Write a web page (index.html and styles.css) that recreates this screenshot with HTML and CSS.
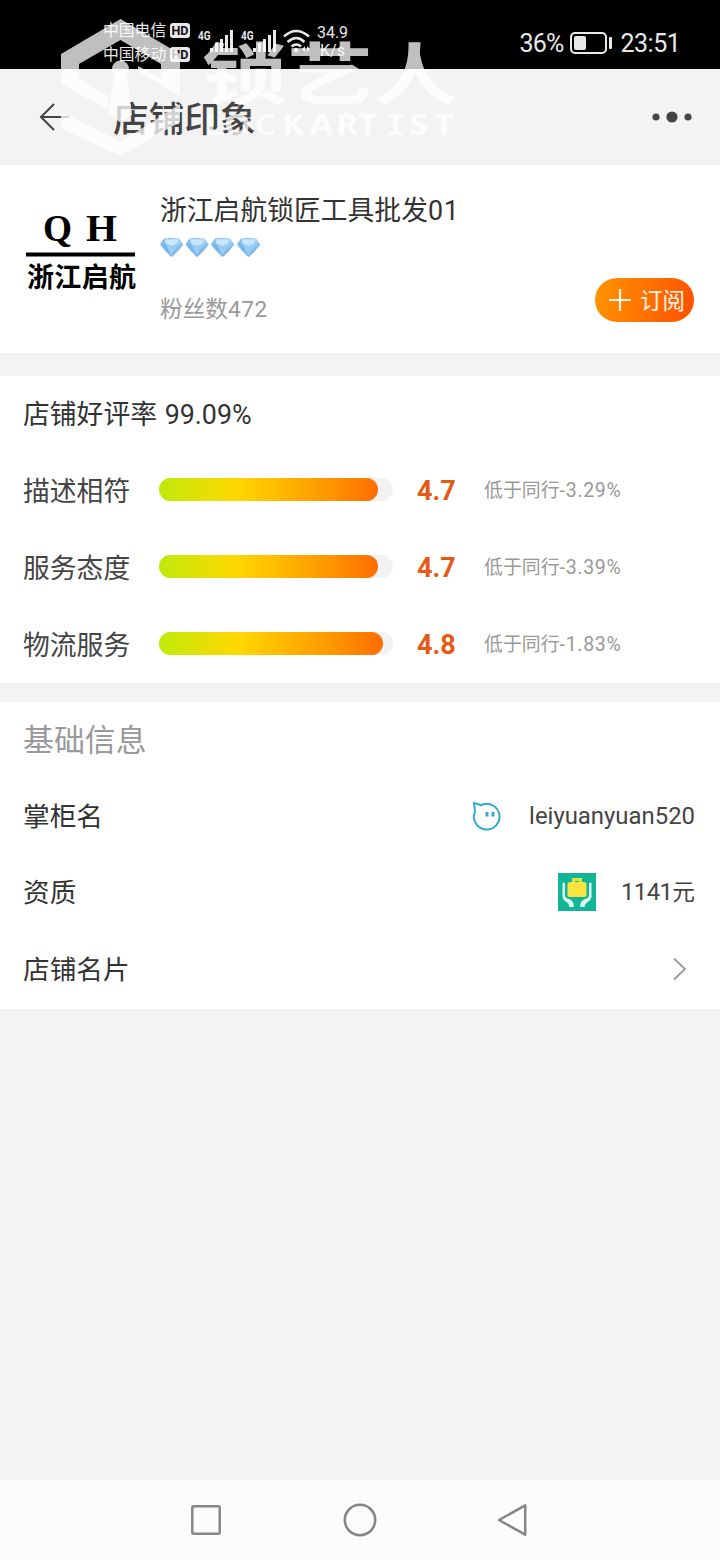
FILE: index.html
```html
<!DOCTYPE html>
<html lang="zh-CN">
<head>
<meta charset="utf-8">
<title>店铺印象</title>
<link rel="stylesheet" href="styles.css">
</head>
<body>
<div class="screen">
  <div class="status">
    <div class="carriers">
      <div class="carrier"><span>中国电信</span><b class="hd">HD</b></div>
      <div class="carrier"><span>中国移动</span><b class="hd">HD</b></div>
    </div>
    <svg class="signals" width="112" height="30" viewBox="196 25 112 30">
      <g fill="#e8e8e8">
        <text class="net" x="198" y="39.500" textLength="12.500" lengthAdjust="spacingAndGlyphs">4G</text>
        <text class="net" x="241" y="39.500" textLength="12.500" lengthAdjust="spacingAndGlyphs">4G</text>
        <path d="M210 48h3v4h-3zM215 43h3v9h-3zM220 39h3v13h-3zM225 35h3v17h-3zM230 30h3v22h-3zM253 48h3v4h-3zM258 43h3v9h-3zM263 39h3v13h-3zM268 35h3v17h-3zM273 30h3v22h-3z"/>
        <circle cx="296" cy="50" r="2.200"/>
        <path d="M305 46v6l-3-3zM307 46v6l3-3z"/>
      </g>
      <path d="M284 36.500q12-11 25 0M287.500 42q9-8 17 0M291.500 46.500q5-4 9.500 0" fill="none" stroke="#e8e8e8" stroke-width="2.500"/>
    </svg>
    <div class="speed"><span>34.9</span><span>K/s</span></div>
    <div class="power">
      <span class="pct">36%</span>
      <svg width="43" height="24" viewBox="0 0 43 24"><rect x="1" y="2" width="35" height="20" rx="4" fill="none" stroke="#e8e8e8" stroke-width="2"/><rect x="4" y="5" width="12" height="14" rx="2" fill="#e8e8e8"/><rect x="39" y="6" width="3" height="12" rx="1" fill="#e8e8e8"/></svg>
      <span class="clock">23:51</span>
    </div>
  </div>

  <header class="topbar">
    <svg class="back" width="32" height="32" viewBox="0 0 32 32"><path d="M16 3L3 16l13 13M3 16h28" fill="none" stroke="#444" stroke-width="2"/></svg>
    <h1>店铺印象</h1>
    <svg class="more" width="40" height="14" viewBox="0 0 40 14" fill="#444"><circle cx="4" cy="7" r="3.600"/><circle cx="20" cy="7" r="5.600"/><circle cx="36" cy="7" r="3.600"/></svg>
  </header>

  <section class="shop">
    <svg class="logo" width="112" height="112" viewBox="0 0 112 112">
      <text class="qh" x="19" y="43.500" textLength="29" lengthAdjust="spacingAndGlyphs">Q</text>
      <text class="qh" x="62" y="43.500" textLength="31" lengthAdjust="spacingAndGlyphs">H</text>
      <path d="M2 55.500h109v4H2z"/>
      <text class="cn" x="3" y="90" textLength="109" lengthAdjust="spacing">浙江启航</text>
    </svg>
    <div class="shop-info">
      <h2>浙江启航锁匠工具批发<span>01</span></h2>
      <svg class="gems" width="102" height="20" viewBox="0 0 102 20">
        <defs>
          <linearGradient id="gem" x1="0" y1="0" x2="1" y2="1"><stop offset="0" stop-color="#6faee6"/><stop offset=".5" stop-color="#a5d4f8"/><stop offset="1" stop-color="#4488d0"/></linearGradient>
          <g id="diamond"><path d="M4 .5Q11.500-.5 19 .5L23.300 6.500Q18 14 11.500 19 5 14 0 6.500z" fill="url(#gem)"/><path d="M4.500 1.300h14L16.500 6 11.500 8 5.500 5.500z" fill="#c6e7fd"/><path d="M5.500 6l6 2 5-2-5 11.500z" fill="#9acdf6"/><path d="M1 6.500l4.500-.5 6 12Q5 13 1 6.500z" fill="#78b4ec"/></g>
        </defs>
        <use href="#diamond"/><use href="#diamond" x="25.500"/><use href="#diamond" x="51"/><use href="#diamond" x="77"/>
      </svg>
      <div class="fans">粉丝数<span>472</span></div>
    </div>
    <div class="subscribe"><svg width="22" height="22" viewBox="0 0 22 22"><path d="M11 0v22M0 11h22" stroke="#fff6e8" stroke-width="2.200"/></svg><span>订阅</span></div>
  </section>

  <section class="ratings">
    <div class="good">店铺好评率 <span>99.09%</span></div>
    <div class="rate"><span class="label">描述相符</span><div class="track"><div class="fill" style="width:219px"></div></div><b>4.7</b><span class="cmp">低于同行<i>-3.29%</i></span></div>
    <div class="rate"><span class="label">服务态度</span><div class="track"><div class="fill" style="width:219px"></div></div><b>4.7</b><span class="cmp">低于同行<i>-3.39%</i></span></div>
    <div class="rate"><span class="label">物流服务</span><div class="track"><div class="fill" style="width:224px"></div></div><b>4.8</b><span class="cmp">低于同行<i>-1.83%</i></span></div>
  </section>

  <section class="basic">
    <h3>基础信息</h3>
    <div class="row"><span class="key">掌柜名</span>
      <div class="value"><svg width="30" height="30" viewBox="0 0 30 30"><path d="M4 10.500L3 2l7 2M9.500 4.500a12.800 12.800 0 1 1-5.500 6" fill="none" stroke="#36a9ce" stroke-width="2"/><path d="M14.500 11h3v4.500h-3zM20.500 11h3v4.500h-3z" fill="#36a9ce"/></svg><span class="name">leiyuanyuan520</span></div>
    </div>
    <div class="row"><span class="key">资质</span>
      <div class="value"><svg class="bag" width="38" height="38" viewBox="0 0 38 38"><path d="M0 0h38v38H0z" fill="#12b596"/><path d="M15.500 10V6.500h7V10" fill="none" stroke="#dbe84a" stroke-width="3"/><rect x="9.500" y="9" width="19" height="15" rx="2.500" fill="#f8e440"/><path d="M4.500 10q1.500-1 2.500 0v12q0 3 4 4 5 2 5 8h-4.500q0-3-3-5-4-2-4-6zM33.500 10q-1.500-1-2.500 0v12q0 3-4 4-5 2-5 8h4.500q0-3 3-5 4-2 4-6z" fill="#d9fbf3"/></svg><span class="money">1141<span>元</span></span></div>
    </div>
    <div class="row"><span class="key">店铺名片</span>
      <svg class="chevron" width="14" height="24" viewBox="0 0 14 24"><path d="M1 1.500L12 12 1 22.500" fill="none" stroke="#999" stroke-width="1.800"/></svg>
    </div>
  </section>

  <nav class="navbar">
    <svg width="34" height="34" viewBox="0 0 34 34"><rect x="3.300" y="3.300" width="27.400" height="27.400" rx="1.500"/></svg>
    <svg width="34" height="34" viewBox="0 0 34 34"><circle cx="17" cy="17" r="15.200"/></svg>
    <svg width="34" height="34" viewBox="0 0 34 34"><path d="M28.200 2.300v29.400L2 17z"/></svg>
  </nav>

  <svg class="watermark" width="420" height="150" viewBox="50 10 420 150">
    <path d="M61 54L120.500 19 180 54v42l-20-12-22-12v-6l23 12V64L120.500 40 79 64v14l29 18v14L61 84z"/>
    <path d="M61 112l59.500 30L180 104v18l-59.500 34L61 128z"/>
    <path d="M114 75h13l5 40-12 7-12-7z"/><circle cx="120.500" cy="69" r="8.500"/>
    <text class="wm-cn" x="202" y="99" textLength="256" lengthAdjust="spacingAndGlyphs">锁艺人</text>
    <g transform="translate(205 0) scale(1.17 1)">
      <text class="wm-en" y="135" x="0 16 42.500 65.500 89.500 112 130.500">LOCKART</text>
      <text class="wm-en wm-i" x="154" y="135">I</text>
      <text class="wm-en" y="135" x="174.500 196">ST</text>
    </g>
  </svg>
</div>
</body>
</html>
```
FILE: styles.css
```css
* { box-sizing: border-box; }
body { margin: 0; font-family: Roboto, "Noto Sans CJK SC", sans-serif; color: #333; }
h1, h2, h3 { margin: 0; font-weight: 400; }
svg { display: block; flex: none; }
i { font-style: normal; }
.screen { position: relative; width: 720px; height: 1560px; background: #f3f3f3; display: flex; flex-direction: column; white-space: nowrap; }

.status { height: 69px; background: #000; color: #e8e8e8; display: flex; align-items: flex-start; padding-left: 103px; }
.carriers { padding-top: 18px; width: 93px; }
.carrier { display: flex; align-items: center; gap: 4px; height: 24px; font-size: 15.800px; }
.carrier span { width: 63px; padding-bottom: 2px; }
.hd { width: 20px; height: 15px; border-radius: 3px; background: #e8e8e8; color: #111; font-size: 12.500px; line-height: 15px; text-align: center; }
.signals { margin-top: 25px; overflow: visible; }
.net { font: 700 12.500px Roboto, sans-serif; }
.speed { display: flex; flex-direction: column; align-items: center; width: 32px; margin: 24px 0 0 8.500px; font-size: 16px; line-height: 18px; }
.power { display: flex; align-items: center; margin: 28px 0 0 171px; height: 30px; font-size: 25px; }
.pct { width: 50px; letter-spacing: -.8px; }
.clock { margin-left: 8px; letter-spacing: -.5px; }

.topbar { height: 96px; display: flex; align-items: center; padding: 0 28px 0 38px; }
.topbar h1 { margin-left: 43px; padding-top: 5px; font-size: 35.700px; font-weight: 500; line-height: 50px; color: #444; flex: 1; }

.shop { height: 188px; background: #fff; display: flex; padding: 0 26px 0 24px; }
.logo { margin-top: 32px; }
.qh { font: 700 38px "Liberation Serif", serif; }
.cn { font: 700 27px "Noto Sans CJK SC", sans-serif; }
.shop-info { margin-left: 24px; padding-top: 26px; flex: 1; }
.shop-info h2 { font-size: 26.800px; line-height: 40px; }
.shop-info h2 span { letter-spacing: .8px; }
.gems { margin-top: 7px; }
.fans { margin-top: 35px; font-size: 22.700px; line-height: 34px; color: #999; }
.fans span { letter-spacing: .5px; }
.subscribe { margin-top: 113px; width: 99px; height: 44px; border-radius: 22px; background: linear-gradient(100deg, #ff9500, #ff5000); color: #fff6e8; display: flex; align-items: center; gap: 9px; padding-left: 14px; font-size: 22.500px; }
.subscribe span { padding-bottom: 2px; }

.ratings { margin-top: 23px; height: 307px; background: #fff; padding-left: 23px; }
.good { height: 75px; line-height: 79px; font-size: 26.800px; }
.good span { margin-left: 1px; }
.rate { height: 77px; display: flex; align-items: center; font-size: 26.800px; color: #444; }
.label { width: 136px; }
.track { width: 234px; height: 23px; border-radius: 12px; background: #f2f2f2; }
.fill { height: 23px; border-radius: 12px; background: linear-gradient(90deg, #bfea0a, #ffd800 35%, #ff9200 80%, #ff6c00); }
.rate b { margin-left: 24px; width: 67px; padding-top: 2px; color: #e65a17; font-size: 27px; }
.cmp { padding-bottom: 2px; font-size: 18.900px; color: #999; }
.cmp i { font-size: 19.500px; letter-spacing: .7px; }

.basic { margin-top: 19px; height: 307px; background: #fff; padding: 0 25px 0 23px; }
.basic h3 { height: 76px; line-height: 77px; font-size: 30.900px; color: #999; }
.row { height: 76.500px; display: flex; align-items: center; justify-content: space-between; font-size: 26.700px; }
.key { padding-bottom: 4px; }
.value { display: flex; align-items: center; font-size: 23.900px; color: #444; }
.name { margin-left: 28px; }
.bag { margin-bottom: 2px; }
.money { margin-left: 25px; padding-bottom: 5px; letter-spacing: -.6px; }
.money span { font-size: 22.700px; letter-spacing: 0; }
.chevron { margin-right: 8px; }

.navbar { margin-top: auto; height: 80px; background: #fcfcfc; display: flex; justify-content: center; align-items: center; gap: 120px; }
.navbar svg { fill: none; stroke: #858585; stroke-width: 2.500; stroke-linejoin: round; }

.watermark { position: absolute; left: 50px; top: 10px; fill: #fff; opacity: .75; }
.wm-cn { font: 700 67px "Noto Sans CJK SC", sans-serif; }
.wm-en { font: 700 29px "Open Sans", sans-serif; }
.wm-i { font-family: "DejaVu Sans Mono", monospace; }
```
